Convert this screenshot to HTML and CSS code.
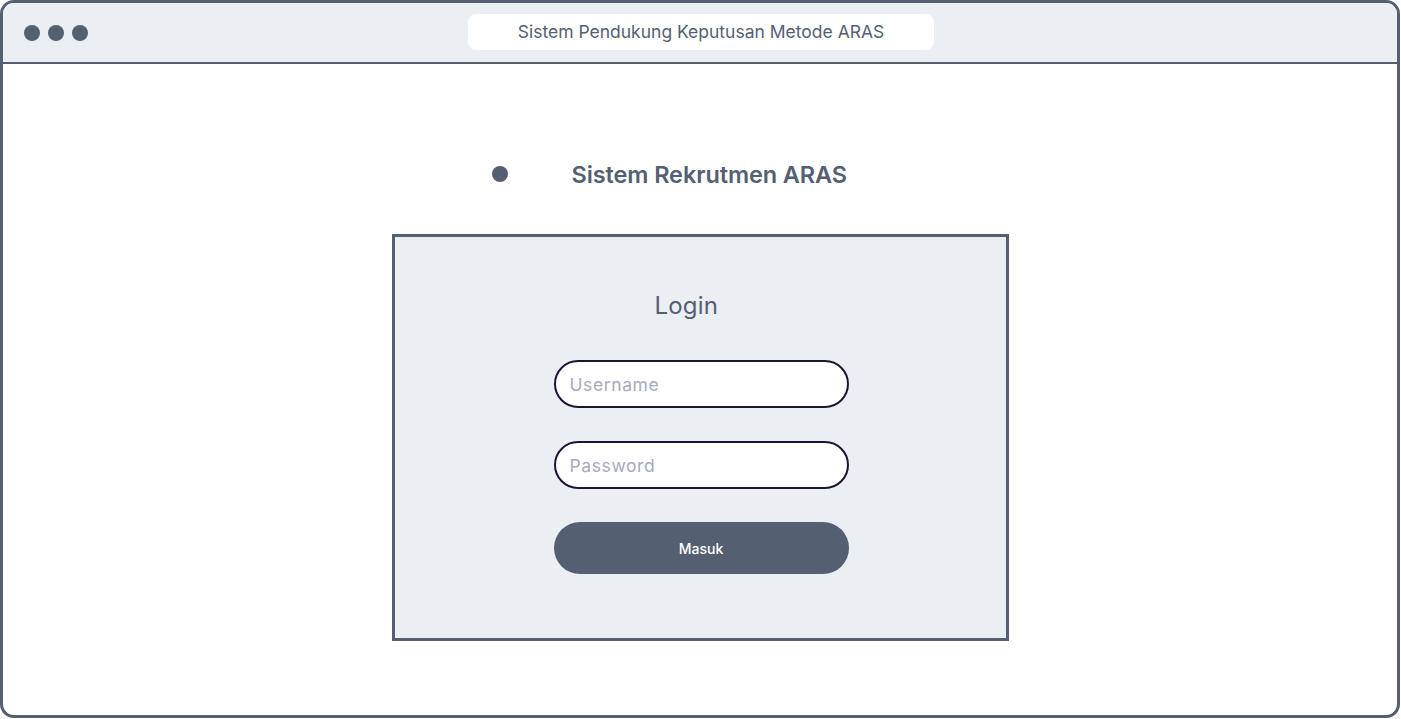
FILE: index.html
```html
<!DOCTYPE html>
<html lang="id">
<head>
<meta charset="utf-8">
<title>Sistem Pendukung Keputusan Metode ARAS</title>
<link rel="stylesheet" href="styles.css">
</head>
<body>
<div class="window">
  <header class="chrome">
    <div class="dots"><span class="dot"></span><span class="dot"></span><span class="dot"></span></div>
    <div class="address">Sistem Pendukung Keputusan Metode ARAS</div>
  </header>
  <main class="content">
    <div class="column">
      <div class="brand">
        <span class="brand-dot"></span>
        <h1 class="brand-name">Sistem Rekrutmen ARAS</h1>
      </div>
      <section class="login-box">
        <form class="form">
          <h2 class="login-title">Login</h2>
          <input class="field" type="text" placeholder="Username">
          <input class="field" type="password" placeholder="Password">
          <button class="submit" type="button">Masuk</button>
        </form>
      </section>
    </div>
  </main>
</div>
</body>
</html>
```

FILE: styles.css
```css
* { box-sizing: border-box; }
html, body { margin: 0; padding: 0; background: #ffffff; }
body {
  font-family: Inter, "Liberation Sans", sans-serif;
  color: #545f71;
  padding: 0 1px 1px 0;
}
.window {
  width: 1400px;
  height: 718px;
  border: 3px solid #545f71;
  border-radius: 14px;
  overflow: hidden;
  display: flex;
  flex-direction: column;
  background: #ffffff;
}
.chrome {
  height: 61px;
  flex: none;
  background: #ebeef2;
  border-bottom: 2px solid #545f71;
  display: flex;
  align-items: center;
  position: relative;
  padding-left: 21px;
}
.dots { display: flex; gap: 8px; }
.dot {
  width: 16px;
  height: 16px;
  border-radius: 50%;
  background: #545f71;
}
.address {
  position: absolute;
  left: 465px;
  top: 11px;
  width: 466px;
  height: 36px;
  background: #ffffff;
  border-radius: 8px;
  font-size: 17.5px;
  line-height: 36px;
  text-align: center;
  color: #545f71;
}
.content {
  flex: 1;
  display: flex;
  justify-content: center;
  padding-top: 97px;
}
.column {
  width: 617px;
}
.brand {
  display: flex;
  align-items: center;
  gap: 64px;
  padding-left: 100px;
  height: 26px;
}
.brand-dot {
  width: 16px;
  height: 16px;
  border-radius: 50%;
  background: #545f71;
  flex: none;
}
.brand-name {
  margin: 0;
  font-size: 23.5px;
  font-weight: 600;
  color: #545f71;
  letter-spacing: -0.1px;
}
.login-box {
  margin-top: 47px;
  height: 407px;
  border: 3px solid #545f71;
  background: #ebeff3;
  padding: 53px 0 0 159px;
}
.form {
  width: 295px;
  display: flex;
  flex-direction: column;
}
.login-title {
  margin: 0 0 38px 0;
  padding-left: 101px;
  font-size: 24px;
  font-weight: 400;
  line-height: 32px;
  color: #545f71;
  letter-spacing: 0.2px;
}
.field {
  height: 48px;
  border: 2px solid #1c1433;
  border-radius: 24px;
  background: #ffffff;
  padding: 0 14px;
  font-family: Inter, "Liberation Sans", sans-serif;
  font-size: 17.5px;
  letter-spacing: 0.6px;
  color: #545f71;
  margin-bottom: 33px;
  outline: none;
}
.field::placeholder { color: #aaa8bf; }
.submit {
  height: 52px;
  border: none;
  border-radius: 26px;
  background: #545f71;
  color: #ffffff;
  font-family: Inter, "Liberation Sans", sans-serif;
  font-size: 14px;
  font-weight: 500;
}
```
